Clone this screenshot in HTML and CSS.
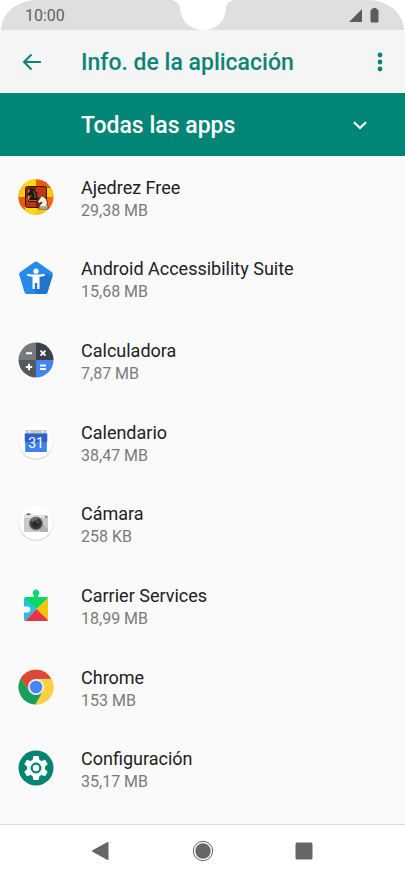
FILE: index.html
```html
<!DOCTYPE html>
<html lang="es">
<head>
<meta charset="utf-8">
<meta name="viewport" content="width=device-width, initial-scale=1">
<title>Info. de la aplicación</title>
<link rel="stylesheet" href="styles.css">
</head>
<body>
<div class="phone">
  <div class="status">
    <time class="clock">10:00</time>
    <svg class="notch" width="62" height="30" viewBox="0 0 62 30" aria-hidden="true"><path fill="#fff" d="M0 0C5 1 8 4 8 9C9 21 18 29 29 30H34C45 29 53 21 54 9C54 4 57 1 62 0Z"/></svg>
    <svg class="signals" width="31" height="16" viewBox="0 0 31 16" aria-hidden="true"><path fill="#5c5c5c" d="M0 15L13 2V15ZM21.500 3.500Q21.500 2.500 22.500 2.500H23.500V1H27.500V2.500H28.500Q29.500 2.500 29.500 3.500V14Q29.500 15.500 28.500 15.500H22.500Q21.500 15.500 21.500 14Z"/></svg>
  </div>
  <header class="toolbar">
    <button class="icon-button" aria-label="Atrás"><svg width="20" height="18" viewBox="0 0 20 18"><path d="M19 9H2M9.500 1.500L2 9L9.500 16.500" fill="none" stroke="#0a8574" stroke-width="2"/></svg></button>
    <h1 class="title">Info. de la aplicación</h1>
    <button class="icon-button more" aria-label="Más opciones"><svg width="6" height="20" viewBox="0 0 6 20"><g fill="#0a8574"><circle cx="3" cy="3" r="2.400"/><circle cx="3" cy="10" r="2.400"/><circle cx="3" cy="17" r="2.400"/></g></svg></button>
  </header>
  <button class="filter"><span>Todas las apps</span><svg width="14" height="9" viewBox="0 0 14 9" aria-hidden="true"><path d="M1 1.200L7 7L13 1.200" fill="none" stroke="#fff" stroke-width="2.200"/></svg></button>
  <ul class="apps">
    <li><a class="app" href="#ajedrez">
      <svg class="logo" viewBox="0 0 36 36" aria-hidden="true">
        <clipPath id="disc"><circle cx="18" cy="18" r="17.500"/></clipPath>
        <g clip-path="url(#disc)"><path fill="#f26a0c" d="M0 0H36V36H0Z"/><path fill="#fbc814" d="M2 0H18V9H2ZM0 18H8V9H0ZM27 9H36V18H27ZM9 28H18V36H9ZM18 28H30V36H18Z"/><path fill="#fdd90f" d="M7 0H18V8H7ZM7 28H18V36H7Z"/><path fill="#e95c0b" d="M18 0H36V9H18ZM0 18H8V28H0Z"/></g>
        <rect x="7.500" y="7.500" width="21" height="21" rx="2" fill="#bd3712" stroke="#3d1009"/><path fill="#7f210c" d="M8 8H18V18H8ZM18 18H28V28H18Z"/><path fill="#c98954" d="M10 11H18V21H10Z"/>
        <path fill="#201713" stroke="#1a1210" stroke-width=".6" d="M10.500 22.500H20V20L18.500 19C20 15 18 10.500 14.500 10.500L13.500 9L12.500 11L10 15L11 17L14 15.500C14 17 11.500 18.500 11.500 20Z"/><path d="M15 12Q18 14 17 19M11 21.500H19" fill="none" stroke="#b5875d" stroke-width=".8"/>
        <path fill="#f8edda" stroke="#35251d" stroke-width=".8" d="M20.500 30H30V27.500L29 26.500C30 22 28 18 24.500 17.500L23 16L22.500 18.500L19.500 22.500L21 24.500L24 23C24 25 21 26 21 27.500Z"/><path d="M21 28H29.500" stroke="#35251d" stroke-width=".7"/>
      </svg>
      <span class="label"><span class="name">Ajedrez Free</span><span class="size">29,38 MB</span></span></a></li>
    <li><a class="app" href="#accesibilidad">
      <svg class="logo" viewBox="0 0 36 36" aria-hidden="true">
        <path fill="#2989e8" d="M16.500 1.900Q18 .9 19.500 1.900L34 12.200Q35.300 13.200 34.800 14.700L29.500 32.300Q29 34 27.300 34H8.700Q7 34 6.500 32.300L1.200 14.700Q.7 13.200 2 12.200Z"/>
        <path fill="#2075ce" d="M26 13.500L34.500 16L29.500 32.300Q29 34 27.300 34H19.500L14.500 29L16 16Z"/>
        <circle cx="18" cy="11.200" r="2.600" fill="#fff"/><path fill="#fff" d="M9.500 13.700Q18 15.500 26.500 13.700L27 15.800L21.500 17V29H19.200V23H16.800V29H14.500V17L9 15.800Z"/>
      </svg>
      <span class="label"><span class="name">Android Accessibility Suite</span><span class="size">15,68 MB</span></span></a></li>
    <li><a class="app" href="#calculadora">
      <svg class="logo" viewBox="0 0 36 36" aria-hidden="true">
        <path fill="#757a80" d="M18 18V.5A17.500 17.500 0 0 0 .5 18Z"/><path fill="#3d4045" d="M18 18V.5A17.500 17.500 0 0 1 35.500 18Z"/><path fill="#55595f" d="M18 18V35.500A17.500 17.500 0 0 1 .5 18Z"/><path fill="#4285f4" d="M18 18V35.500A17.500 17.500 0 0 0 35.500 18Z"/>
        <path d="M8 11.200H14M22.500 8.700L27.500 13.700M27.500 8.700L22.500 13.700M7.800 25H14.200M11 21.800V28.200M22 23.500H28M22 27H28" stroke="#fff" stroke-width="1.900"/>
      </svg>
      <span class="label"><span class="name">Calculadora</span><span class="size">7,87 MB</span></span></a></li>
    <li><a class="app" href="#calendario">
      <svg class="logo" viewBox="0 0 36 36" aria-hidden="true">
        <circle cx="18" cy="18.500" r="17.300" fill="#d4d4d4"/><circle cx="18" cy="17.700" r="17" fill="#fff"/>
        <path fill="#c3c5c8" d="M7.500 6H28.500V11H7.500Z"/><circle cx="11.500" cy="7.700" r="1" fill="#fff"/><circle cx="24.500" cy="7.700" r="1" fill="#fff"/>
        <path fill="#2c62c8" d="M6.700 9.500H29.300V17L28.500 18.500V28H7.500V18.500L6.700 17Z"/><path fill="#4181ed" d="M6.700 18H29.300L28.500 20V28H7.500V20Z"/>
        <text x="18" y="23.500" class="day">31</text>
      </svg>
      <span class="label"><span class="name">Calendario</span><span class="size">38,47 MB</span></span></a></li>
    <li><a class="app" href="#camara">
      <svg class="logo" viewBox="0 0 36 36" aria-hidden="true">
        <circle cx="18" cy="18.500" r="17.300" fill="#d4d4d4"/><circle cx="18" cy="17.700" r="17" fill="#fff"/>
        <rect x="8.500" y="8.500" width="4" height="3" rx="1" fill="#555"/><rect x="6" y="10" width="24" height="17" rx="1" fill="#c9c9c9"/><path fill="#dedede" d="M6 10H30V13H6Z"/><path fill="#4fa9b8" d="M27 11H29.500V13H27Z"/><path fill="#b2b2b2" d="M22 23L25 19L30 24V27H22Z"/>
        <circle cx="18" cy="18.500" r="7" fill="#777"/><circle cx="18" cy="18.500" r="5.800" fill="#383838"/><path fill="#6e6e6e" d="M13 16A5.800 5.800 0 0 1 20 13L17 18Z"/><circle cx="18" cy="18.500" r="3" fill="#29292b"/><circle cx="19.500" cy="17" r=".8" fill="#999"/>
      </svg>
      <span class="label"><span class="name">Cámara</span><span class="size">258 KB</span></span></a></li>
    <li><a class="app" href="#carrier">
      <svg class="logo" viewBox="0 0 36 36" aria-hidden="true">
        <path fill="#08d669" d="M6 12Q6 10 8 10H15.300Q16.500 10 16 8.500A3.300 3.300 0 1 1 20 8.500Q19.500 10 20.700 10H28.500Q30 10 30 11.500L18.500 22Z"/>
        <path fill="#26bfed" d="M6 11.500L18.500 22L7 34Q6 33.500 6 32.500V25.500H8.500A3.100 3.100 0 1 0 8.500 19.500H6Z"/>
        <path fill="#fbc40b" d="M30 11L18.500 22L30 33Z"/><path fill="#e73545" d="M18.500 22L30 33Q30 34 28.500 34H7Z"/>
      </svg>
      <span class="label"><span class="name">Carrier Services</span><span class="size">18,99 MB</span></span></a></li>
    <li><a class="app" href="#chrome">
      <svg class="logo" viewBox="0 0 36 36" aria-hidden="true">
        <circle cx="18" cy="18" r="17.500" fill="#fdcf43"/>
        <path fill="#db4837" d="M2.850 9.250A17.500 17.500 0 0 1 33.200 9.700L18 10L11 22Z"/>
        <path fill="#17a05d" d="M2.850 9.250A17.500 17.500 0 0 0 17.500 35.500L25 22L11 22Z"/>
        <path fill="#fdcf43" d="M18 10H33.500A17.500 17.500 0 0 1 17.500 35.500L25 22Z"/>
        <circle cx="18" cy="18" r="8" fill="#f3f3f3"/><circle cx="18" cy="18" r="6.300" fill="#4688f1"/>
      </svg>
      <span class="label"><span class="name">Chrome</span><span class="size">153 MB</span></span></a></li>
    <li><a class="app" href="#configuracion">
      <svg class="logo" viewBox="0 0 36 36" aria-hidden="true">
        <circle cx="18" cy="18" r="17.500" fill="#058373"/>
        <g fill="#fff"><circle cx="18" cy="18" r="9"/><g id="tooth"><path d="M15.200 6.700Q15.300 6 16 6H20Q20.700 6 20.800 6.700L21.500 11H14.500ZM15.200 29.300Q15.300 30 16 30H20Q20.700 30 20.800 29.300L21.500 25H14.500Z"/></g><use href="#tooth" transform="rotate(60 18 18)"/><use href="#tooth" transform="rotate(120 18 18)"/></g>
        <circle cx="18" cy="18" r="4.300" fill="#fff" stroke="#058373" stroke-width="2.200"/>
      </svg>
      <span class="label"><span class="name">Configuración</span><span class="size">35,17 MB</span></span></a></li>
  </ul>
  <nav class="navbar">
    <button aria-label="Atrás"><svg width="22" height="22" viewBox="0 0 22 22"><path fill="#666" d="M1.500 10.300L16.500 2Q17.500 1.700 17.500 2.500V19.500Q17.500 20.300 16.500 20L1.500 11.700Q.5 11 1.500 10.300Z"/></svg></button>
    <button aria-label="Inicio"><svg width="22" height="22" viewBox="0 0 22 22"><circle cx="11" cy="11" r="9.700" fill="none" stroke="#666"/><circle cx="11" cy="11" r="7.700" fill="#666"/></svg></button>
    <button aria-label="Recientes"><svg width="22" height="22" viewBox="0 0 22 22"><rect x="2.500" y="2.500" width="17" height="17" rx="1.500" fill="#666"/></svg></button>
  </nav>
</div>
</body>
</html>
```
FILE: styles.css
```css
* { box-sizing: border-box; }
body { margin: 0; background: #fff; font-family: Roboto, sans-serif; }
button { margin: 0; padding: 0; border: 0; background: none; font: inherit; color: inherit; }
svg { display: block; }

.phone { display: flex; flex-direction: column; min-height: 100vh; }

.status {
  display: grid;
  grid-template-columns: 1fr auto 1fr;
  height: 30px;
  margin: 0 1px;
  padding: 0 24px;
  background: #dfdfdf;
  border-radius: 36px 36px 0 0 / 30px 30px 0 0;
}
.clock { align-self: center; padding-top: 2px; font-size: 16px; line-height: 20px; color: #5f5f5f; }
.signals { justify-self: end; align-self: center; }

.toolbar {
  display: flex;
  align-items: center;
  height: 63px;
  padding: 0 16px;
  background: #f5f5f5;
}
.icon-button { display: flex; align-items: center; justify-content: center; width: 32px; height: 48px; }
.more { width: 18px; }
.title { flex: 1; margin: 0; padding: 2px 0 0 33px; font-size: 23px; line-height: 28px; font-weight: 500; color: #0a8574; }

.filter {
  display: flex;
  align-items: center;
  justify-content: space-between;
  height: 63px;
  padding: 2px 38px 0 81px;
  background: #018577;
  color: #fff;
  font-size: 23px;
  line-height: 28px;
  font-weight: 500;
}

.apps {
  display: flex;
  flex: 1;
  flex-direction: column;
  margin: 0;
  padding: 0 0 15px;
  list-style: none;
  background: #fafafa;
}
.apps li { display: flex; flex: 1; }
.app {
  display: flex;
  flex: 1;
  align-items: center;
  gap: 27px;
  padding: 0 18px;
  color: #212121;
  text-decoration: none;
}
.logo { flex: none; width: 36px; height: 36px; }
.label { display: flex; flex-direction: column; padding-top: 4px; }
.name { font-size: 18px; line-height: 24px; }
.size { font-size: 16px; line-height: 22px; color: #7a7a7a; }
.day { font-size: 14px; text-anchor: middle; fill: #fff; }

.navbar {
  display: flex;
  justify-content: center;
  align-items: center;
  gap: 79px;
  height: 54px;
  padding-bottom: 2px;
  border-top: 1px solid #dadada;
}
```
